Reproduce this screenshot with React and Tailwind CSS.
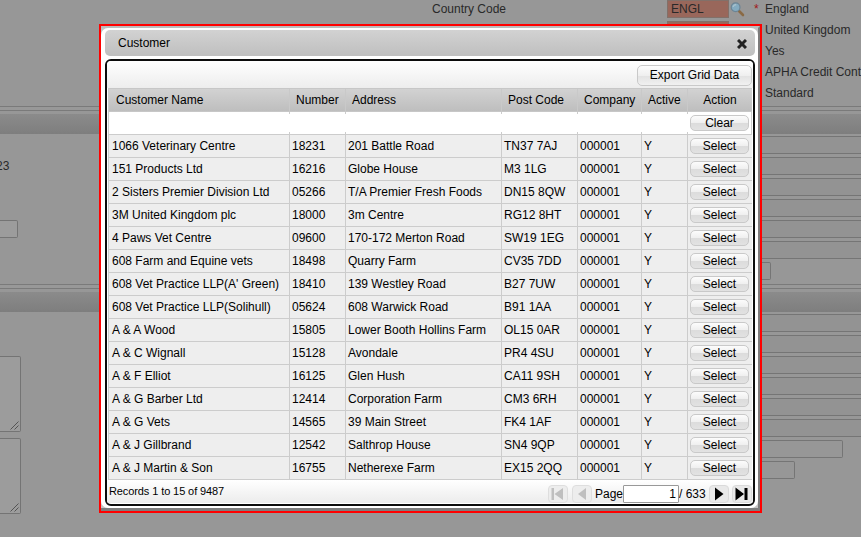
import React from "react";

const rows = [
  ["1066 Veterinary Centre", "18231", "201 Battle Road", "TN37 7AJ"],
  ["151 Products Ltd", "16216", "Globe House", "M3 1LG"],
  ["2 Sisters Premier Division Ltd", "05266", "T/A Premier Fresh Foods", "DN15 8QW"],
  ["3M United Kingdom plc", "18000", "3m Centre", "RG12 8HT"],
  ["4 Paws Vet Centre", "09600", "170-172 Merton Road", "SW19 1EG"],
  ["608 Farm and Equine vets", "18498", "Quarry Farm", "CV35 7DD"],
  ["608 Vet Practice LLP(A' Green)", "18410", "139 Westley Road", "B27 7UW"],
  ["608 Vet Practice LLP(Solihull)", "05624", "608 Warwick Road", "B91 1AA"],
  ["A & A Wood", "15805", "Lower Booth Hollins Farm", "OL15 0AR"],
  ["A & C Wignall", "15128", "Avondale", "PR4 4SU"],
  ["A & F Elliot", "16125", "Glen Hush", "CA11 9SH"],
  ["A & G Barber Ltd", "12414", "Corporation Farm", "CM3 6RH"],
  ["A & G Vets", "14565", "39 Main Street", "FK4 1AF"],
  ["A & J Gillbrand", "12542", "Salthrop House", "SN4 9QP"],
  ["A & J Martin & Son", "16755", "Netherexe Farm", "EX15 2QQ"],
];

const columns = "grid grid-cols-[181px_56px_156px_76px_64px_46px_64px]";

function GridButton({ children }) {
  return (
    <button className="h-[16px] w-[59px] rounded-[5px] border border-[#c9c9c9] bg-[linear-gradient(#fcfcfc,#efefef_50%,#dcdcdc_51%,#e2e2e2)] text-center leading-[14px]">
      {children}
    </button>
  );
}

function Separator() {
  return <div className="h-[5px] border-y border-[#7a7a7a] bg-[#989898]" />;
}

function SectionBar() {
  return (
    <div className="pb-[2px]">
      <Separator />
      <div className="mt-[3px] h-[20px] bg-linear-to-b from-[#8b8b8b] to-[#7e7e7e]" />
    </div>
  );
}

function FieldStack() {
  return (
    <div className="flex flex-col gap-[3px]">
      {[0, 1, 2, 3, 4, 5].map((i) => (
        <div key={i} className="h-[18px] border-y border-[#757575] bg-[#939393]" />
      ))}
    </div>
  );
}

function Grip() {
  return (
    <svg className="h-[9px] w-[9px]" viewBox="0 0 9 9" fill="none" stroke="#4c4c4c" strokeWidth="0.9">
      <path d="M0.5 8.5 8.5 0.5M4.5 8.5 8.5 4.5" />
    </svg>
  );
}

function Magnifier() {
  return (
    <svg className="h-[15px] w-[15px]" viewBox="0 0 15 15">
      <path d="M9 9 13 13" stroke="#8a6a45" strokeWidth="2.6" strokeLinecap="round" />
      <circle cx="5.6" cy="5.3" r="4.4" fill="#84abc0" stroke="#6c8494" strokeWidth="1.2" />
      <path d="M3.2 5a2.5 2.5 0 0 1 3-2.2" stroke="#a9c2cd" strokeWidth="1.3" fill="none" />
    </svg>
  );
}

function BackgroundForm() {
  return (
    <div className="flex h-[537px] w-[861px] flex-col bg-[#979797] text-[#292929]">
      <div className="flex h-[106px] justify-between">
        <div className="ml-[432px] w-[74px] whitespace-nowrap pt-[1px] leading-[16px]">Country Code</div>
        <div className="flex w-[194px] shrink-0">
          <div className="flex w-[62px] flex-col gap-[3px]">
            <div className="h-[18px] border border-[#827069] bg-[#99675b] pl-[3px] leading-[16px]">ENGL</div>
            <div className="h-[18px] border border-[#827069] bg-[#99675b]" />
          </div>
          <div className="ml-[1px] mt-[2px] w-[16px]"><Magnifier /></div>
          <div className="w-[19px] pl-[8px] pt-[1px] leading-[16px] text-[#a01717]">*</div>
          <div className="-mt-[1px] w-[96px] whitespace-nowrap leading-[21px]">
            <div>England</div>
            <div>United Kingdom</div>
            <div>Yes</div>
            <div>APHA Credit Cont</div>
            <div>Standard</div>
          </div>
        </div>
      </div>
      <div className="flex grow justify-between">
        <div className="w-[100px]">
          <SectionBar />
          <div className="-ml-[4px] mt-[22px] h-[16px] leading-[16px]">23</div>
          <div className="mt-[46px] h-[18px] w-[18px] rounded-r-[2px] border border-l-0 border-[#747474] bg-[#9c9c9c]" />
          <div className="mt-[46px]"><SectionBar /></div>
          <div className="mt-[42px] flex flex-col gap-[6px]">
            {[0, 1].map((i) => (
              <div key={i} className="flex h-[76px] w-[21px] items-end justify-end rounded-r-[2px] border border-l-0 border-[#747474] bg-[#9c9c9c] p-[1px]">
                <Grip />
              </div>
            ))}
          </div>
        </div>
        <div className="w-[100px]">
          <SectionBar />
          <FieldStack />
          <div className="mt-[3px] h-[18px] w-[10px] rounded-r-[2px] border border-l-0 border-[#757575]" />
          <div className="mt-[4px]"><SectionBar /></div>
          <FieldStack />
          <div className="mt-[3px] h-[18px] w-[82px] rounded-r-[2px] border border-l-0 border-[#757575]" />
          <div className="mt-[3px] h-[18px] w-[34px] rounded-r-[2px] border border-l-0 border-[#757575]" />
        </div>
      </div>
    </div>
  );
}

function PagerButton({ type, disabled }) {
  return (
    <button className={disabled ? "h-[18px] w-[20px] rounded-[4px] border border-[#dedede] bg-[#ededed] text-[#bfbfbf]" : "h-[18px] w-[20px] rounded-[4px] border border-[#dadada] bg-[#e9e9e9] text-black"}>
      <svg className="h-[16px] w-[18px]" viewBox="0 0 18 16" fill="currentColor">
        {type === "first" && <path d="M2.5 2h2.5v12H2.5zM14 2v12L5.5 8z" />}
        {type === "prev" && <path d="M13 2v12L5 8z" />}
        {type === "next" && <path d="M5 1.5v13L13.5 8z" />}
        {type === "last" && <path d="M2.5 1.5v13L11 8zM11.5 2H14.5v12h-3z" />}
      </svg>
    </button>
  );
}

function CustomerDialog() {
  return (
    <div className="absolute left-[99px] top-[24px] h-[489px] w-[663px] border-2 border-[#ff0000] bg-[#8a8a8a]">
      <div className="h-[485px] border-t-2 border-r-2 border-b-3 border-t-[#bcbcbc] border-r-[#7c7c7c] border-b-[#7c7c7c] bg-[#c4c4c4]">
        <div className="flex h-[480px] flex-col rounded-[7px] bg-white pl-[4px] pr-[3px] pt-[2px]">
          <div className="flex h-[26px] items-center justify-between rounded-[5px] bg-linear-to-b from-[#d2d2d2] to-[#bfbfbf] pl-[13px] pr-[8px]">
            <span>Customer</span>
            <svg className="mt-[1px] h-[10px] w-[10px]" viewBox="0 0 10 10" stroke="#222" strokeWidth="3">
              <path d="M1 1 9 9M9 1 1 9" />
            </svg>
          </div>
          <div className="mt-[3px] flex h-[447px] flex-col overflow-hidden rounded-[6px] border-2 border-[#0c0c0c] bg-white">
            <div className="flex h-[27px] justify-end bg-linear-to-b from-white to-[#ededed] pr-[1px] pt-[4px]">
              <button className="h-[21px] w-[115px] rounded-[5px] border border-[#c9c9c9] bg-[linear-gradient(#fcfcfc,#efefef_50%,#e2e2e2_51%,#f0f0f0)] leading-[17px]">Export Grid Data</button>
            </div>
            <div className="ml-[1px] w-[644px] border-x border-[#cccccc]">
              <div className={`${columns} -mr-px h-[24px] border-y border-[#c7c7c7] bg-linear-to-b from-[#d2d2d2] to-[#bebebe] leading-[22px]`}>
                <div className="border-r border-[#c9c9c9] pl-[7px]">Customer Name</div>
                <div className="border-r border-[#c9c9c9] pl-[6px]">Number</div>
                <div className="border-r border-[#c9c9c9] pl-[6px]">Address</div>
                <div className="border-r border-[#c9c9c9] pl-[6px]">Post Code</div>
                <div className="border-r border-[#c9c9c9] pl-[6px]">Company</div>
                <div className="border-r border-[#c9c9c9] pl-[6px]">Active</div>
                <div className="text-center">Action</div>
              </div>
              <div className={`${columns} -mr-px h-[23px] border-b border-[#cccccc]`}>
                {[0, 1, 2, 3, 4, 5].map((i) => (
                  <div key={i} className="flex flex-col items-end justify-between">
                    <div className="h-[2px] w-px bg-[#cccccc]" />
                    <div className="h-[2px] w-px bg-[#cccccc]" />
                  </div>
                ))}
                <div className="flex items-start pl-[2px] pt-[3px]"><GridButton>Clear</GridButton></div>
              </div>
              {rows.map((row) => (
                <div key={row[1]} className={`${columns} -mr-px h-[23px] whitespace-nowrap border-b border-[#cccccc] bg-[#eeeeee] leading-[22px]`}>
                  {[...row, "000001", "Y"].map((cell, i) => (
                    <div key={i} className="border-r border-[#cccccc] pl-[2px] first:pl-[3px]">{cell}</div>
                  ))}
                  <div className="flex items-start pl-[2px] pt-[3px]"><GridButton>Select</GridButton></div>
                </div>
              ))}
            </div>
            <div className="flex h-[23px] justify-between bg-linear-to-b from-white to-[#ececec]">
              <div className="ml-[2px] text-[11px] leading-[22px] tracking-[-0.1px]">Records 1 to 15 of 9487</div>
              <div className="mr-[1px] flex items-center pt-[4px]">
                <PagerButton type="first" disabled />
                <div className="ml-[4px] flex"><PagerButton type="prev" disabled /></div>
                <span className="ml-[3px] w-[28px]">Page</span>
                <div className="h-[18px] w-[56px] rounded-[1px] border border-[#999999] bg-white pr-[2px] text-right leading-[17px]">1</div>
                <span className="w-[26px] whitespace-nowrap">/ 633</span>
                <div className="ml-[4px] flex"><PagerButton type="next" /></div>
                <div className="ml-[3px] flex"><PagerButton type="last" /></div>
              </div>
            </div>
          </div>
        </div>
      </div>
    </div>
  );
}

export default function App() {
  return (
    <div className="relative h-[537px] w-[861px] overflow-hidden font-['Liberation_Sans',Arial,sans-serif] text-[12px] text-black">
      <BackgroundForm />
      <CustomerDialog />
    </div>
  );
}
